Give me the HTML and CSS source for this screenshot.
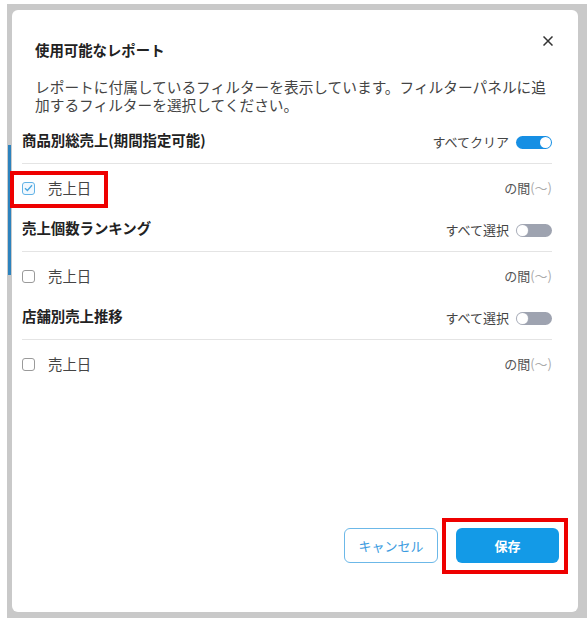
FILE: index.html
```html
<!DOCTYPE html>
<html lang="ja">
<head>
    <meta charset="UTF-8">
    <meta name="viewport" content="width=device-width, initial-scale=1.0">
    <title>使用可能なレポート</title>
    <link rel="stylesheet" href="styles.css">
</head>
<body>
    <div class="screen">
        <div class="overlay">
            <div class="modal">
                <div class="modal-header">
                    <h2 class="modal-title">使用可能なレポート</h2>
                    <button type="button" class="close-btn" aria-label="閉じる">
                        <svg width="10" height="10" viewBox="0 0 10 10">
                            <path d="M0.5 0.5 L9.5 9.5 M9.5 0.5 L0.5 9.5" stroke="#333" stroke-width="1.5" fill="none"/>
                        </svg>
                    </button>
                </div>
                <p class="modal-desc">レポートに付属しているフィルターを表示しています。フィルターパネルに追加するフィルターを選択してください。</p>

                <div class="report-list">
                    <section class="report">
                        <div class="report-head">
                            <h3 class="report-name">商品別総売上(期間指定可能)</h3>
                            <div class="toggle-wrap">
                                <span>すべてクリア</span>
                                <span class="toggle on"></span>
                            </div>
                        </div>
                        <div class="filter-row">
                            <span class="check checked">
                                <svg width="9" height="8" viewBox="0 0 9 8">
                                    <path d="M1 4.2 L3.4 6.5 L8 1.2" stroke="#4aa6df" stroke-width="1.3" fill="none"/>
                                </svg>
                            </span>
                            <span class="filter-name">売上日</span>
                            <span class="filter-op">の間<span class="paren">(〜)</span></span>
                        </div>
                    </section>

                    <section class="report">
                        <div class="report-head">
                            <h3 class="report-name">売上個数ランキング</h3>
                            <div class="toggle-wrap">
                                <span>すべて選択</span>
                                <span class="toggle"></span>
                            </div>
                        </div>
                        <div class="filter-row">
                            <span class="check"></span>
                            <span class="filter-name">売上日</span>
                            <span class="filter-op">の間<span class="paren">(〜)</span></span>
                        </div>
                    </section>

                    <section class="report">
                        <div class="report-head">
                            <h3 class="report-name">店舗別売上推移</h3>
                            <div class="toggle-wrap">
                                <span>すべて選択</span>
                                <span class="toggle"></span>
                            </div>
                        </div>
                        <div class="filter-row">
                            <span class="check"></span>
                            <span class="filter-name">売上日</span>
                            <span class="filter-op">の間<span class="paren">(〜)</span></span>
                        </div>
                    </section>
                </div>

                <div class="modal-footer">
                    <button type="button" class="btn btn-cancel">キャンセル</button>
                    <button type="button" class="btn btn-save">保存</button>
                </div>
            </div>
        </div>

        <!-- red annotation boxes from the screenshot -->
        <div class="mark mark-check"></div>
        <div class="mark mark-save"></div>
    </div>
</body>
</html>
```

FILE: styles.css
```css
* {
    box-sizing: border-box;
}
body {
    margin: 0;
    background: #fff;
    font-family: "Noto Sans CJK JP", "Noto Sans", sans-serif;
    color: #333;
}
.screen {
    position: relative;
    width: 587px;
    height: 626px;
    padding: 4px 0 0 7px;
    overflow: hidden;
}
.overlay {
    height: 614px;
    padding: 6px 9px 6px 5px;
    background-color: #c9c9c9;
    /* dimmed blue bar of the page behind */
    background-image: linear-gradient(#2c82bd, #2c82bd);
    background-size: 3px 130px;
    background-position: 1px 141px;
    background-repeat: no-repeat;
}
.modal {
    height: 602px;
    background: #fff;
    border-radius: 6px;
    padding: 30px 26px 49px 10px;
    display: flex;
    flex-direction: column;
}
.modal-header {
    display: flex;
    justify-content: space-between;
    align-items: center;
    padding-left: 13px;
    margin-right: -1px;
}
.modal-title {
    margin: 0;
    font-size: 14.4px;
    font-weight: bold;
    line-height: 20px;
    color: #222;
}
.close-btn {
    border: none;
    background: none;
    padding: 0;
    width: 10px;
    height: 10px;
    margin-top: -19px;
    display: flex;
}
.modal-desc {
    margin: 18px 0 10px 13px;
    font-size: 14.7px;
    line-height: 18px;
    color: #444;
    max-width: 522px;
}
.report-head {
    display: flex;
    justify-content: space-between;
    align-items: flex-start;
    height: 40px;
    padding: 6px 0 13px;
    border-bottom: 1px solid #e4e4e4;
}
.report-name {
    margin: 0;
    font-size: 14.4px;
    font-weight: bold;
    line-height: 20px;
    color: #222;
}
.toggle-wrap {
    display: flex;
    align-items: center;
    gap: 7px;
    margin-top: 4px;
    height: 16px;
    font-size: 13px;
    line-height: 16px;
    color: #444;
}
.toggle {
    position: relative;
    width: 36px;
    height: 13px;
    border-radius: 7px;
    background: #9ea3b0;
}
.toggle::after {
    content: "";
    position: absolute;
    top: 1px;
    left: 1px;
    width: 11px;
    height: 11px;
    border-radius: 50%;
    background: #fff;
    box-shadow: 0 0 0 0.5px #b8bcc6;
}
.toggle.on {
    background: #168fe4;
}
.toggle.on::after {
    left: 24px;
    box-shadow: none;
}
.filter-row {
    display: flex;
    align-items: center;
    height: 48px;
    padding: 14px 0;
    line-height: 20px;
}
.check {
    width: 13px;
    height: 13px;
    border: 1px solid #9a9a9a;
    border-radius: 3px;
    display: flex;
    align-items: center;
    justify-content: center;
    margin-right: 13px;
}
.check.checked {
    border-color: #62b3e6;
    background: #f1f8fe;
}
.filter-name {
    font-size: 14.4px;
    color: #444;
}
.filter-op {
    margin-left: auto;
    font-size: 13px;
    color: #555;
}
.paren {
    color: #aaa;
}
.modal-footer {
    margin-top: auto;
    margin-right: -7px;
    display: flex;
    justify-content: flex-end;
    gap: 18px;
}
.btn {
    height: 35px;
    border-radius: 6px;
    font-family: inherit;
    font-size: 13px;
}
.btn-cancel {
    width: 94px;
    background: #fff;
    border: 1px solid #6cb8e8;
    color: #3b9be0;
}
.btn-save {
    width: 103px;
    background: #139ae7;
    border: none;
    color: #fff;
    font-weight: bold;
}
.mark {
    position: absolute;
    border: 4px solid #ee0000;
}
.mark-check {
    left: 10px;
    top: 171px;
    width: 98px;
    height: 37px;
}
.mark-save {
    left: 442px;
    top: 518px;
    width: 126px;
    height: 56px;
}
```
